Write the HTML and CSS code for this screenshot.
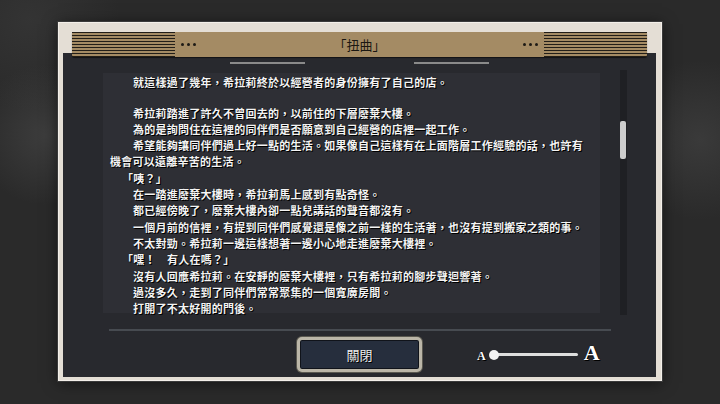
FILE: index.html
```html
<!DOCTYPE html>
<html lang="zh-Hant">
<head>
<meta charset="utf-8">
<title>扭曲</title>
<link rel="stylesheet" href="styles.css">
</head>
<body>
<div class="stage">
  <div class="frame">
    <div class="header">
      <div class="stripes"></div>
      <div class="dots"><i></i><i></i><i></i></div>
      <div class="title">「扭曲」</div>
      <div class="dots"><i></i><i></i><i></i></div>
      <div class="stripes"></div>
    </div>
    <div class="panel">
      <div class="tabs"><div class="tab"></div><div class="tab"></div></div>
      <div class="body">
        <div class="text">
          <p class="i">就這樣過了幾年，希拉莉終於以經營者的身份擁有了自己的店。</p>
          <p class="blank"></p>
          <p class="i">希拉莉踏進了許久不曾回去的，以前住的下層廢棄大樓。</p>
          <p class="i">為的是詢問住在這裡的同伴們是否願意到自己經營的店裡一起工作。</p>
          <p class="i">希望能夠讓同伴們過上好一點的生活。如果像自己這樣有在上面階層工作經驗的話，也許有</p>
          <p>機會可以遠離辛苦的生活。</p>
          <p class="q">「咦？」</p>
          <p class="i">在一踏進廢棄大樓時，希拉莉馬上感到有點奇怪。</p>
          <p class="i">都已經傍晚了，廢棄大樓內卻一點兒講話的聲音都沒有。</p>
          <p class="i">一個月前的信裡，有提到同伴們感覺還是像之前一樣的生活著，也沒有提到搬家之類的事。</p>
          <p class="i">不太對勁。希拉莉一邊這樣想著一邊小心地走進廢棄大樓裡。</p>
          <p class="q">「嘿！　有人在嗎？」</p>
          <p class="i">沒有人回應希拉莉。在安靜的廢棄大樓裡，只有希拉莉的腳步聲迴響著。</p>
          <p class="i">過沒多久，走到了同伴們常常聚集的一個寬廣房間。</p>
          <p class="i">打開了不太好開的門後。</p>
        </div>
        <div class="scroll"><div class="thumb"></div></div>
      </div>
      <div class="sep"></div>
      <div class="footer">
        <div class="btn">關閉</div>
        <div class="slider">
          <span class="a-small">A</span>
          <span class="knob"></span>
          <span class="track"></span>
          <span class="a-big">A</span>
        </div>
      </div>
    </div>
  </div>
</div>
</body>
</html>
```
FILE: styles.css
```css
html, body {
  margin: 0;
  padding: 0;
}
body {
  width: 720px;
  height: 404px;
  overflow: hidden;
  background:
    radial-gradient(circle at 45px 135px, rgba(95, 95, 95, 0.35), rgba(95, 95, 95, 0) 70px),
    radial-gradient(circle at 700px 140px, rgba(95, 95, 95, 0.3), rgba(95, 95, 95, 0) 80px),
    radial-gradient(circle at 30px 20px, rgba(70, 70, 70, 0.35), rgba(70, 70, 70, 0) 90px),
    #2a2a2a;
  font-family: "Noto Sans CJK TC", "Noto Sans CJK JP", sans-serif;
}
.stage {
  padding: 22px 0 0 58px;
}
.frame {
  width: 604px;
  height: 359px;
  box-sizing: border-box;
  background: #e4ded5;
  border: 1px solid #f3efe9;
  padding: 9px 5px 3px 4px;
  box-shadow: 0 0 0 1px #3a3a3a, 0 2px 14px rgba(0, 0, 0, 0.55);
  display: flex;
  flex-direction: column;
}
.header {
  height: 25px;
  margin: 0 9px;
  background: #a48b64;
  border-radius: 2px;
  display: flex;
  align-items: center;
  position: relative;
  z-index: 1;
  box-shadow: 0 1px 1px rgba(0, 0, 0, 0.55);
}
.stripes {
  width: 103px;
  align-self: stretch;
  background: repeating-linear-gradient(to bottom, #221e18 0, #221e18 1.5px, rgba(0, 0, 0, 0) 1.5px, rgba(0, 0, 0, 0) 3px);
}
.dots {
  display: flex;
  gap: 3px;
  margin: 0 6px;
}
.dots i {
  display: block;
  width: 3px;
  height: 3px;
  border-radius: 50%;
  background: #1d1a15;
}
.title {
  flex: 1;
  text-align: center;
  font-size: 13px;
  color: #1a1712;
  line-height: 25px;
}
.panel {
  flex: 1;
  margin-top: -4px;
  background: #28292e;
  display: flex;
  flex-direction: column;
}
.tabs {
  display: flex;
  justify-content: center;
  gap: 109px;
  margin-top: 9px;
}
.tab {
  width: 75px;
  height: 2px;
  background: #8a8a8a;
}
.body {
  display: flex;
  margin-top: 6px;
  height: 245px;
}
.text {
  margin: 3px 0 2px 40px;
  width: 497px;
  box-sizing: border-box;
  background: #2e2f35;
  padding: 1px 0 0 7px;
  color: #f4f4f4;
  font-size: 11px;
  letter-spacing: 0.25px;
  font-weight: 700;
  line-height: 16.3px;
  text-shadow: 1px 1px 0 #000, 0 0 1px #000;
}
.text p {
  margin: 0;
  height: 16.3px;
  white-space: nowrap;
}
.text p.blank {
  height: 14.3px;
}
.text p.i {
  padding-left: 23px;
}
.text p.q {
  padding-left: 12px;
}
.scroll {
  margin-left: 20px;
  width: 7px;
  background: #1f2024;
  padding-top: 51px;
  box-sizing: border-box;
}
.thumb {
  width: 6px;
  height: 38px;
  border-radius: 2px;
  background: #cdcdcd;
}
.sep {
  margin: 14px 45px 0 46px;
  height: 2px;
  background: #474b51;
}
.footer {
  display: flex;
  align-items: center;
  margin-top: 6px;
  padding-left: 234px;
}
.btn {
  width: 125px;
  height: 35px;
  box-sizing: border-box;
  border: 3px solid #bbb6a8;
  border-radius: 5px;
  background: #262e3d;
  box-shadow: inset 0 0 0 1px #10131a, 0 0 0 1px #5a5850;
  display: flex;
  align-items: center;
  justify-content: center;
  color: #ededed;
  font-size: 13px;
  text-shadow: 1px 1px 0 #000;
}
.slider {
  margin-left: 55px;
  display: flex;
  align-items: center;
  font-family: "Liberation Serif", serif;
  font-weight: 700;
  color: #ffffff;
  text-shadow: 1px 1px 0 #000, 0 0 1px #000;
}
.a-small {
  font-size: 12px;
  line-height: 12px;
  margin-top: 2px;
}
.knob {
  width: 10px;
  height: 10px;
  border-radius: 50%;
  background: #f2f2f2;
  margin-left: 3px;
  position: relative;
  z-index: 1;
}
.track {
  width: 84px;
  height: 3px;
  border-radius: 2px;
  background: #dedede;
  margin-left: -5px;
}
.a-big {
  font-size: 22px;
  line-height: 22px;
  margin-left: 6px;
  margin-top: -3px;
}
```
